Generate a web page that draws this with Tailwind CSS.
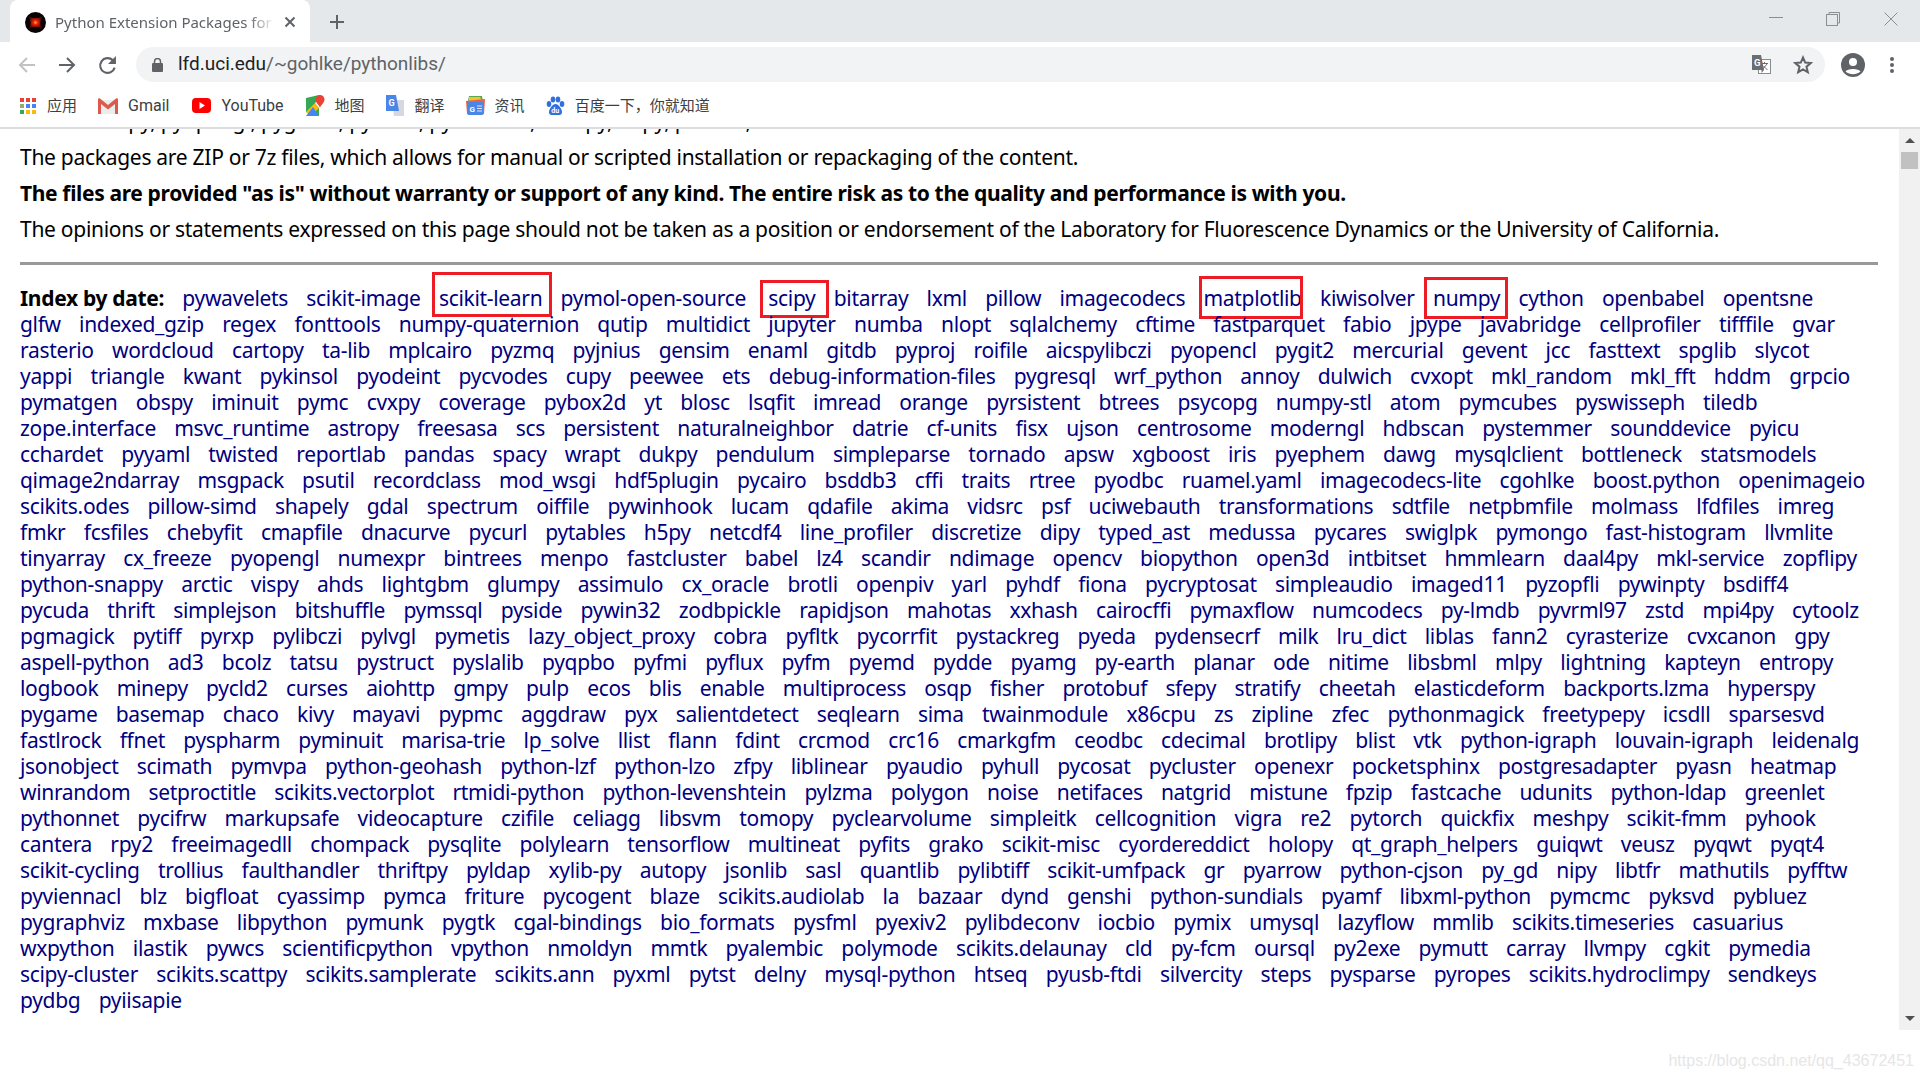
<!DOCTYPE html>
<html lang="en">
<head>
  <meta charset="UTF-8">
  <title>Python Extension Packages for Windows</title>
  <script src="https://cdn.jsdelivr.net/npm/@tailwindcss/browser@4"></script>
</head>
<body class="bg-white h-[1080px] overflow-hidden font-['Roboto','Noto_Sans_CJK_SC',sans-serif]">
  <!-- tab strip -->
  <div class="h-[42px] bg-[#e5e8eb] flex items-end pl-[10px] relative">
    <div class="w-[300px] h-[42px] bg-white rounded-t-[8px] flex items-center pl-[15px] pt-[2px]">
      <svg class="w-[21px] h-[21px] shrink-0" viewBox="0 0 20 20">
        <defs><radialGradient id="glow"><stop offset="0" stop-color="#ffb020"/><stop offset="0.35" stop-color="#e8200c"/><stop offset="1" stop-color="#500804"/></radialGradient></defs>
        <circle cx="10" cy="10" r="10" fill="#0a0303"/>
        <path d="M3.500 4 Q10 8 16.500 4 Q12.500 10 16.500 16 Q10 12 3.500 16 Q7.500 10 3.500 4Z" fill="url(#glow)"/>
      </svg>
      <span class="ml-[9px] w-[220px] whitespace-nowrap overflow-hidden text-[15px] text-[#5f6368] [font-family:'Noto_Sans',sans-serif] [mask-image:linear-gradient(to_right,black_88%,transparent)]">Python Extension Packages for Windows</span>
      <svg class="w-[12px] h-[12px] ml-[9px]" viewBox="0 0 12 12"><path d="M1.500 1.500 10.500 10.500M10.500 1.500 1.500 10.500" stroke="#5f6368" stroke-width="2"/></svg>
    </div>
    <svg class="w-[16px] h-[16px] ml-[19px] mb-[12px]" viewBox="0 0 16 16"><path d="M8 1V15M1 8H15" stroke="#5f6368" stroke-width="2"/></svg>
    <!-- window controls -->
    <div class="ml-auto h-[42px] flex items-start">
      <svg class="w-[14px] h-[14px] mt-[11px] mr-[43px]" viewBox="0 0 14 14"><path d="M0 6.500H14" stroke="#8c8f92" stroke-width="1"/></svg>
      <svg class="w-[14px] h-[14px] mt-[12px] mr-[44px]" viewBox="0 0 14 14" fill="none" stroke="#8c8f92"><rect x="0.500" y="2.500" width="11" height="11"/><path d="M3 2.500V.5H13.500V11H11.500"/></svg>
      <svg class="w-[14px] h-[14px] mt-[12px] mr-[22px]" viewBox="0 0 14 14"><path d="M.5 .5 13.500 13.500M13.500 .5 .5 13.500" stroke="#8c8f92"/></svg>
    </div>
  </div>

  <!-- toolbar -->
  <div class="h-[47px] flex items-start">
    <div class="w-[136px] h-[42px] flex items-center shrink-0 pl-[18px] gap-[22px] pt-[4px]">
      <svg class="w-[18px] h-[18px]" viewBox="0 0 18 18" fill="none" stroke="#c0c2c4" stroke-width="2"><path d="M17 9H2M9 2 2 9 9 16"/></svg>
      <svg class="w-[18px] h-[18px]" viewBox="0 0 18 18" fill="none" stroke="#5f6368" stroke-width="2"><path d="M1 9H16M9 2 16 9 9 16"/></svg>
      <svg class="w-[19px] h-[19px]" viewBox="0 0 18 18" fill="none" stroke="#5f6368" stroke-width="2"><path d="M15.800 11A7 7 0 1 1 13.900 3.900L16 6"/><path d="M17 0V7.500H9.500Z" fill="#5f6368" stroke="none"/></svg>
    </div>
    <div class="mt-[5px] w-[1689px] h-[35px] rounded-full bg-[#f1f3f4] flex items-center pl-[16px] pr-[11px]">
      <svg class="w-[11px] h-[14px]" viewBox="0 0 11 14" fill="#5f6368"><rect y="5" width="11" height="9" rx="1"/><path d="M2.500 5V3.500a3 3 0 0 1 6 0V5" fill="none" stroke="#5f6368" stroke-width="1.500"/></svg>
      <span class="ml-[15px] text-[19px] text-[#202124]">lfd.uci.edu<span class="text-[#5f6368]">/~gohlke/pythonlibs/</span></span>
      <svg class="ml-auto w-[19px] h-[19px]" viewBox="0 0 19 19">
        <rect x="6.500" y="4.500" width="12" height="14" fill="#fff" stroke="#8a8d90"/>
        <path d="M9 8.500H16M12.500 7V8.500M10 15 15 9M11.500 11 15.500 15" fill="none" stroke="#6a6e72"/>
        <path d="M0 0H9L12 15H0Z" fill="#6a6e72"/>
        <path d="M9.500 15 12 15 9.500 18Z" fill="#6a6e72"/>
        <text x="2" y="10.500" font-size="9.500" font-weight="700" fill="#fff" font-family="Roboto">G</text>
      </svg>
      <svg class="ml-[22px] mr-[1px] w-[20px] h-[20px]" viewBox="0 0 20 20" fill="none" stroke="#5f6368" stroke-width="2"><path d="M10 2.500 12.200 7.600 17.700 8.100 13.500 11.700 14.800 17.100 10 14.300 5.200 17.100 6.500 11.700 2.300 8.100 7.800 7.600Z"/></svg>
    </div>
    <svg class="ml-[16px] mt-[11px] w-[24px] h-[24px]" viewBox="0 0 24 24"><circle cx="12" cy="12" r="12" fill="#5f6368"/><circle cx="12" cy="9" r="4" fill="#fff"/><path d="M4.500 18.500C6 15 18 15 19.500 18.500 15 22 9 22 4.500 18.500Z" fill="#fff"/></svg>
    <svg class="ml-[25px] mt-[15px] w-[4px] h-[16px]" viewBox="0 0 4 16" fill="#5f6368"><circle cx="2" cy="2" r="2"/><circle cx="2" cy="8" r="2"/><circle cx="2" cy="14" r="2"/></svg>
  </div>

  <!-- bookmarks -->
  <div class="h-[40px] border-b-[2px] border-[#dcdde0] flex items-center pl-[20px] pb-[5px] text-[15px] text-[#3c4043] [font-family:'Noto_Sans_CJK_SC','Noto_Sans',sans-serif]">
    <svg class="w-[16px] h-[16px]" viewBox="0 0 16 16">
      <rect width="4" height="4" fill="#ea4335"/><rect x="6" width="4" height="4" fill="#ea4335"/><rect x="12" width="4" height="4" fill="#ea4335"/>
      <rect y="6" width="4" height="4" fill="#9aa86a"/><rect x="6" y="6" width="4" height="4" fill="#4285f4"/><rect x="12" y="6" width="4" height="4" fill="#4285f4"/>
      <rect y="12" width="4" height="4" fill="#34a853"/><rect x="6" y="12" width="4" height="4" fill="#fbbc05"/><rect x="12" y="12" width="4" height="4" fill="#fbbc05"/>
    </svg>
    <span class="ml-[11px]">应用</span>
    <svg class="ml-[21px] w-[20px] h-[16px]" viewBox="0 0 20 16"><path d="M2 2H18V16H2Z" fill="#ececec"/><path d="M0 1.500C0 .5 1 0 2 .5L10 7 18 .5C19 0 20 .5 20 1.500V16H17V6L10 11.500 3 6V16H0Z" fill="#dc5a4c"/></svg>
    <span class="ml-[10px] [font-family:'Roboto',sans-serif] text-[16px]">Gmail</span>
    <svg class="ml-[23px] w-[19px] h-[15px]" viewBox="0 0 19 15"><rect width="19" height="15" rx="4" fill="#f00"/><path d="M7.500 4 13 7.500 7.500 11Z" fill="#fff"/></svg>
    <span class="ml-[10px] [font-family:'Roboto',sans-serif] text-[16px]">YouTube</span>
    <svg class="ml-[22px] w-[19px] h-[21px]" viewBox="0 0 19 21"><path d="M0 3 13 0V21L0 17Z" fill="#34a853"/><path d="M0 17 9 8 13 13 5 21Z" fill="#fbbc05"/><path d="M0 21 7 12 13 21Z" fill="#4285f4"/><path d="M13 13 9 8 13 4Z" fill="#fff"/><path d="M14 0a4.500 4.500 0 0 1 4.500 4.500C18.500 8 14 11 14 13 14 11 9.500 8 9.500 4.500A4.500 4.500 0 0 1 14 0Z" fill="#ea4335"/></svg>
    <span class="ml-[10px]">地图</span>
    <svg class="ml-[20px] w-[19px] h-[21px]" viewBox="0 0 19 21"><path d="M7 5H19V21H9Z" fill="#d5d8e0"/><path d="M1 0H11L14 16H1Z" fill="#4a86e8"/><text x="3.500" y="11" font-size="9" font-weight="700" fill="#fff" font-family="Roboto">G</text></svg>
    <span class="ml-[11px]">翻译</span>
    <svg class="ml-[21px] w-[19px] h-[20px]" viewBox="0 0 19 20"><path d="M3 0H16L17 5H2Z" fill="#5aa84f"/><path d="M3 1H14L16 5H3Z" fill="#f2c230"/><path d="M0 5 19 3 18 18 1 18Z" fill="#e8604c"/><rect x="1.500" y="6" width="16" height="13" rx="1.500" fill="#4a86e8"/><text x="3.500" y="16" font-size="8" font-weight="700" fill="#fff" font-family="Roboto">G</text><path d="M11 10H16M11 12.500H16M11 15H16" stroke="#dbe6fa"/></svg>
    <span class="ml-[10px]">资讯</span>
    <svg class="ml-[21px] w-[19px] h-[20px]" viewBox="0 0 19 20" fill="#2f6fe0"><ellipse cx="3" cy="8" rx="2.300" ry="3"/><ellipse cx="7" cy="3.500" rx="2.300" ry="3"/><ellipse cx="12" cy="3.500" rx="2.300" ry="3"/><ellipse cx="16" cy="8" rx="2.300" ry="3"/><path d="M9.500 8C12.500 8 16 13 16 16 16 20 12 19 9.500 19 7 19 3 20 3 16 3 13 6.500 8 9.500 8Z"/><text x="5.300" y="17" font-size="7" font-weight="700" fill="#fff" font-family="Roboto">du</text></svg>
    <span class="ml-[10px]">百度一下，你就知道</span>
  </div>

  <!-- page -->
  <div class="h-[901px] flex relative [font-family:'Noto_Sans',sans-serif] text-[21px] leading-[26px] tracking-[-0.28px] text-black">
    <main class="flex-1 overflow-hidden pl-[20px] pr-[21px]">
      <p class="-mt-[21px] whitespace-nowrap">Install numpy, pyopengl, pygame, pycairo, pyreadline, numpy, scipy, pandas, and others.</p>
      <p class="mt-[10px] whitespace-nowrap">The packages are ZIP or 7z files, which allows for manual or scripted installation or repackaging of the content.</p>
      <p class="mt-[10px] whitespace-nowrap font-bold tracking-[-0.35px]">The files are provided "as is" without warranty or support of any kind. The entire risk as to the quality and performance is with you.</p>
      <p class="mt-[10px] whitespace-nowrap">The opinions or statements expressed on this page should not be taken as a position or endorsement of the Laboratory for Fluorescence Dynamics or the University of California.</p>
      <div class="mt-[20px] h-[3px] bg-[#999999]"></div>
      <div id="index" class="mt-[20px] text-[#000080] tracking-[-0.32px] [word-spacing:4px]"></div>
    </main>
    <!-- scrollbar -->
    <div class="w-[21px] bg-[#f1f1f1] flex flex-col items-center relative shrink-0">
      <div class="mt-[9px] w-0 h-0 border-x-[5px] border-x-transparent border-b-[5px] border-b-[#505050]"></div>
      <div class="mt-[9px] w-[17px] h-[17px] bg-[#c1c1c1]"></div>
      <div class="mt-auto mb-[9px] w-0 h-0 border-x-[5px] border-x-transparent border-t-[5px] border-t-[#505050]"></div>
    </div>
  </div>
  <div class="absolute right-[6px] bottom-[7px] text-[16px] text-[#e6e6e6] [font-family:'Liberation_Sans',sans-serif]">https://blog.csdn.net/qq_43672451</div>

  <script>
    const rows = `pywavelets scikit-image scikit-learn pymol-open-source scipy bitarray lxml pillow imagecodecs matplotlib kiwisolver numpy cython openbabel opentsne
glfw indexed_gzip regex fonttools numpy-quaternion qutip multidict jupyter numba nlopt sqlalchemy cftime fastparquet fabio jpype javabridge cellprofiler tifffile gvar
rasterio wordcloud cartopy ta-lib mplcairo pyzmq pyjnius gensim enaml gitdb pyproj roifile aicspylibczi pyopencl pygit2 mercurial gevent jcc fasttext spglib slycot
yappi triangle kwant pykinsol pyodeint pycvodes cupy peewee ets debug-information-files pygresql wrf_python annoy dulwich cvxopt mkl_random mkl_fft hddm grpcio
pymatgen obspy iminuit pymc cvxpy coverage pybox2d yt blosc lsqfit imread orange pyrsistent btrees psycopg numpy-stl atom pymcubes pyswisseph tiledb
zope.interface msvc_runtime astropy freesasa scs persistent naturalneighbor datrie cf-units fisx ujson centrosome moderngl hdbscan pystemmer sounddevice pyicu
cchardet pyyaml twisted reportlab pandas spacy wrapt dukpy pendulum simpleparse tornado apsw xgboost iris pyephem dawg mysqlclient bottleneck statsmodels
qimage2ndarray msgpack psutil recordclass mod_wsgi hdf5plugin pycairo bsddb3 cffi traits rtree pyodbc ruamel.yaml imagecodecs-lite cgohlke boost.python openimageio
scikits.odes pillow-simd shapely gdal spectrum oiffile pywinhook lucam qdafile akima vidsrc psf uciwebauth transformations sdtfile netpbmfile molmass lfdfiles imreg
fmkr fcsfiles chebyfit cmapfile dnacurve pycurl pytables h5py netcdf4 line_profiler discretize dipy typed_ast medussa pycares swiglpk pymongo fast-histogram llvmlite
tinyarray cx_freeze pyopengl numexpr bintrees menpo fastcluster babel lz4 scandir ndimage opencv biopython open3d intbitset hmmlearn daal4py mkl-service zopflipy
python-snappy arctic vispy ahds lightgbm glumpy assimulo cx_oracle brotli openpiv yarl pyhdf fiona pycryptosat simpleaudio imaged11 pyzopfli pywinpty bsdiff4
pycuda thrift simplejson bitshuffle pymssql pyside pywin32 zodbpickle rapidjson mahotas xxhash cairocffi pymaxflow numcodecs py-lmdb pyvrml97 zstd mpi4py cytoolz
pgmagick pytiff pyrxp pylibczi pylvgl pymetis lazy_object_proxy cobra pyfltk pycorrfit pystackreg pyeda pydensecrf milk lru_dict liblas fann2 cyrasterize cvxcanon gpy
aspell-python ad3 bcolz tatsu pystruct pyslalib pyqpbo pyfmi pyflux pyfm pyemd pydde pyamg py-earth planar ode nitime libsbml mlpy lightning kapteyn entropy
logbook minepy pycld2 curses aiohttp gmpy pulp ecos blis enable multiprocess osqp fisher protobuf sfepy stratify cheetah elasticdeform backports.lzma hyperspy
pygame basemap chaco kivy mayavi pypmc aggdraw pyx salientdetect seqlearn sima twainmodule x86cpu zs zipline zfec pythonmagick freetypepy icsdll sparsesvd
fastlrock ffnet pyspharm pyminuit marisa-trie lp_solve llist flann fdint crcmod crc16 cmarkgfm ceodbc cdecimal brotlipy blist vtk python-igraph louvain-igraph leidenalg
jsonobject scimath pymvpa python-geohash python-lzf python-lzo zfpy liblinear pyaudio pyhull pycosat pycluster openexr pocketsphinx postgresadapter pyasn heatmap
winrandom setproctitle scikits.vectorplot rtmidi-python python-levenshtein pylzma polygon noise netifaces natgrid mistune fpzip fastcache udunits python-ldap greenlet
pythonnet pycifrw markupsafe videocapture czifile celiagg libsvm tomopy pyclearvolume simpleitk cellcognition vigra re2 pytorch quickfix meshpy scikit-fmm pyhook
cantera rpy2 freeimagedll chompack pysqlite polylearn tensorflow multineat pyfits grako scikit-misc cyordereddict holopy qt_graph_helpers guiqwt veusz pyqwt pyqt4
scikit-cycling trollius faulthandler thriftpy pyldap xylib-py autopy jsonlib sasl quantlib pylibtiff scikit-umfpack gr pyarrow python-cjson py_gd nipy libtfr mathutils pyfftw
pyviennacl blz bigfloat cyassimp pymca friture pycogent blaze scikits.audiolab la bazaar dynd genshi python-sundials pyamf libxml-python pymcmc pyksvd pybluez
pygraphviz mxbase libpython pymunk pygtk cgal-bindings bio_formats pysfml pyexiv2 pylibdeconv iocbio pymix umysql lazyflow mmlib scikits.timeseries casuarius
wxpython ilastik pywcs scientificpython vpython nmoldyn mmtk pyalembic polymode scikits.delaunay cld py-fcm oursql py2exe pymutt carray llvmpy cgkit pymedia
scipy-cluster scikits.scattpy scikits.samplerate scikits.ann pyxml pytst delny mysql-python htseq pyusb-ftdi silvercity steps pysparse pyropes scikits.hydroclimpy sendkeys
pydbg pyiisapie`.split('\n');

    // red boxes drawn over the words that were marked up
    const marks = {
      'scikit-learn': '<span class="absolute -left-[7px] -right-[10px] -top-[13px] -bottom-[6px] border-[3px] border-[#ed1c24]"></span>',
      'scipy': '<span class="absolute -left-[8px] -right-[14px] -top-[5px] -bottom-[7px] border-[3px] border-[#ed1c24]"></span>',
      'matplotlib': '<span class="absolute -left-[5px] -right-[1px] -top-[9px] -bottom-[8px] border-[3px] border-[#ed1c24]"></span>',
      'numpy': '<span class="absolute -left-[9px] -right-[8px] -top-[8px] -bottom-[8px] border-[3px] border-[#ed1c24]"></span>'
    };

    let html = '';
    rows.forEach((row, i) => {
      const words = row.split(' ').map(w => {
        const marked = i === 0 && marks[w];
        const extra = i === 0 && w === 'scipy' ? ' ml-[4px]' : '';
        return `<a class="relative inline-block whitespace-nowrap${extra}">${w}${marked ? marks[w] : ''}</a>`;
      }).join(' &nbsp;');
      const label = i === 0 ? '<b class="text-black [word-spacing:0]">Index by date:</b> &nbsp;' : '';
      html += `<div class="whitespace-nowrap">${label}${words}</div>`;
    });
    document.getElementById('index').innerHTML = html;
  </script>
</body>
</html>
